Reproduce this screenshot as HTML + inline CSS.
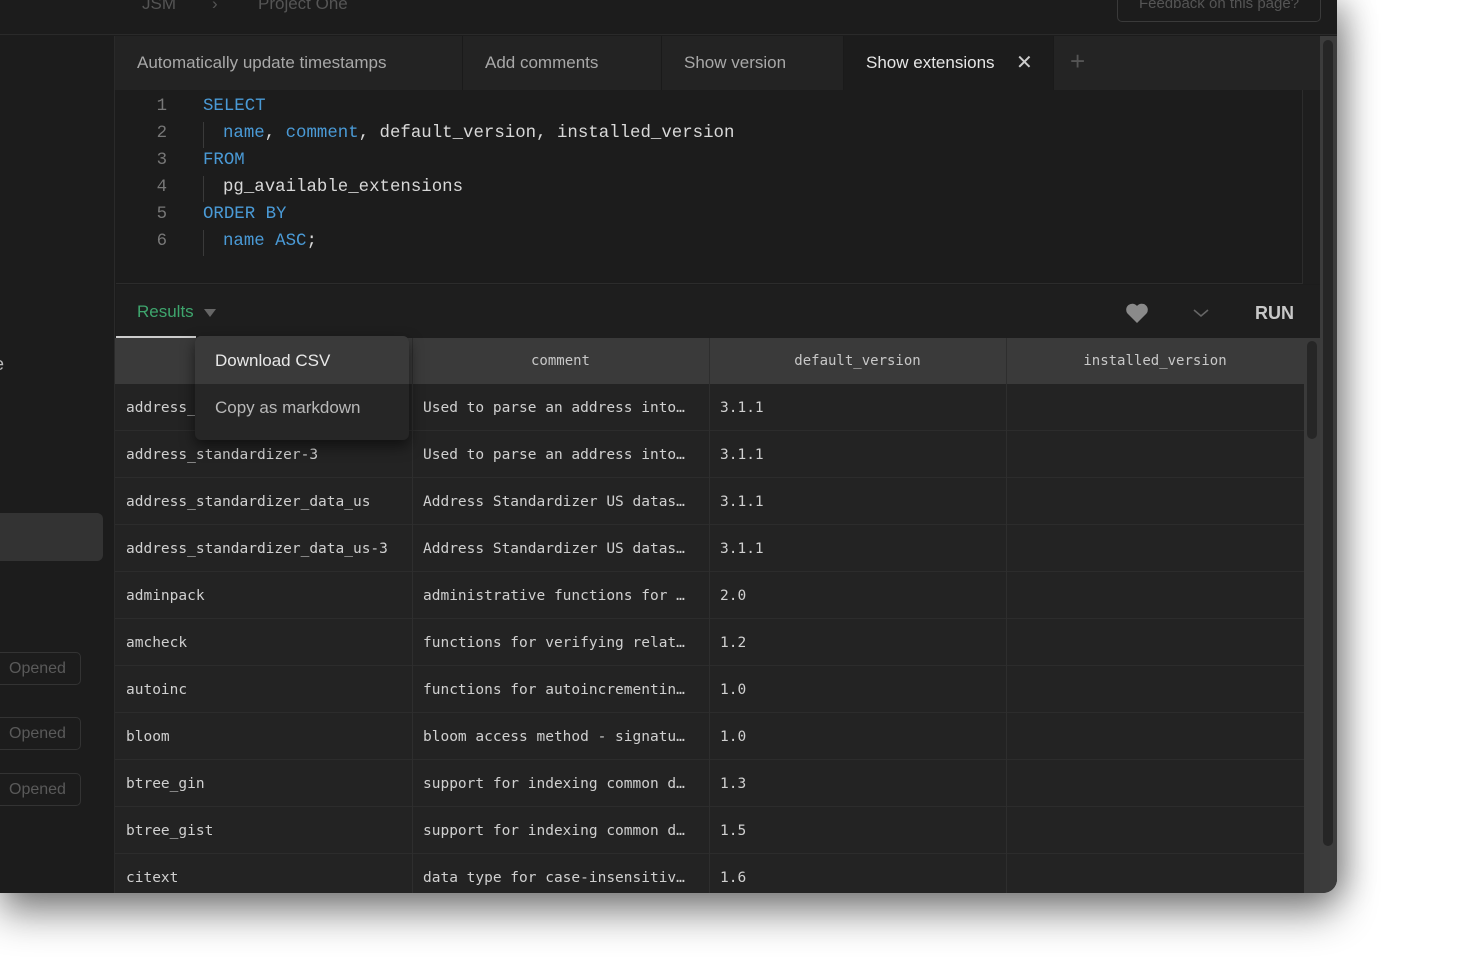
<!DOCTYPE html>
<html><head><style>
*{margin:0;padding:0;box-sizing:border-box}
body{width:1460px;height:960px;background:#fff;position:relative;overflow:hidden;font-family:"Liberation Sans",sans-serif}
.win{position:absolute;left:0;top:0;width:1337px;height:893px;background:#1c1c1c;border-bottom-right-radius:14px;overflow:hidden;box-shadow:0 20px 40px rgba(0,0,0,.45),10px 0 30px rgba(0,0,0,.25)}
.abs{position:absolute}
.mono{font-family:"DejaVu Sans Mono","Liberation Mono",monospace}
.lm{font-family:"Liberation Mono",monospace}
.tab{position:absolute;top:36px;height:54px;line-height:54px;font-size:17px;color:#a8a8a8;padding-left:22px;border-right:1px solid #1a1a1a;background:#232323}
.code{position:absolute;left:0;font-size:17.4px;color:#d8d8d8;white-space:pre}
.kw{color:#4a9ad6}
.ln{position:absolute;width:30px;text-align:right;left:137px;font-size:17.4px;color:#777}
.row{position:absolute;left:115px;width:1189px;height:47px;background:#232323;border-bottom:1px solid #2c2c2c}
.cell{position:absolute;top:0;height:47px;line-height:49px;font-size:14.5px;color:#d0d0d0;padding-left:11px;white-space:nowrap;overflow:hidden}
.vl{position:absolute;top:338px;width:1px;height:560px;background:#2e2e2e}
.badge{position:absolute;left:-10px;width:91px;height:33px;border:1px solid #333;border-radius:5px;color:#5a5a5a;font-size:16px;line-height:31px;padding-left:18px}
</style></head><body>
<div class="win">
 <div class="abs" style="left:0;top:0;width:1337px;height:35px;background:#1c1c1c;border-bottom:1px solid #2a2a2a"></div>
 <div class="abs" style="left:142px;top:-6px;font-size:17px;color:#555">JSM</div>
 <div class="abs" style="left:212px;top:-6px;font-size:17px;color:#555">›</div>
 <div class="abs" style="left:258px;top:-6px;font-size:17px;color:#555">Project One</div>
 <div class="abs" style="left:1117px;top:-12px;width:204px;height:34px;border:1px solid #3a3a3a;border-radius:5px;color:#555;font-size:15px;line-height:30px;text-align:center">Feedback on this page?</div>
 <div class="abs" style="left:0;top:36px;width:115px;height:860px;background:#1c1c1c;border-right:1px solid #2a2a2a"></div>
 <div class="abs" style="left:-6px;top:354px;font-size:18px;color:#bbb">e</div>
 <div class="abs" style="left:0;top:513px;width:103px;height:48px;background:#333;border-radius:0 6px 6px 0"></div>
 <div class="badge" style="top:652px">Opened</div>
 <div class="badge" style="top:717px">Opened</div>
 <div class="badge" style="top:773px">Opened</div>
 <div class="abs" style="left:115px;top:36px;width:1205px;height:54px;background:#242424"></div>
 <div class="tab" style="left:115px;width:348px">Automatically update timestamps</div>
 <div class="tab" style="left:463px;width:199px">Add comments</div>
 <div class="tab" style="left:662px;width:182px">Show version</div>
 <div class="tab" style="left:844px;width:210px;background:#1c1c1c;color:#e6e6e6">Show extensions<span style="position:absolute;left:172px;font-size:20px;color:#ccc">✕</span></div>
 <div class="abs" style="left:1070px;top:46px;font-size:26px;color:#555;font-weight:300">+</div>
 <div class="abs" style="left:116px;top:90px;width:1204px;height:194px;background:#1c1c1c;border-bottom:1px solid #2c2c2c"></div>
 <div class="abs" style="left:1302px;top:90px;width:1px;height:194px;background:#2c2c2c"></div>
 <div class="abs" style="left:1303px;top:90px;width:17px;height:194px;background:#1e1e1e"></div>
 <div class="ln lm" style="top:97px">1</div><div class="ln lm" style="top:124px">2</div><div class="ln lm" style="top:151px">3</div><div class="ln lm" style="top:178px">4</div><div class="ln lm" style="top:205px">5</div><div class="ln lm" style="top:232px">6</div>
 <div class="abs" style="left:203px;top:122px;width:1px;height:26px;background:#3a3a3a"></div>
 <div class="abs" style="left:203px;top:176px;width:1px;height:26px;background:#3a3a3a"></div>
 <div class="abs" style="left:203px;top:230px;width:1px;height:26px;background:#3a3a3a"></div>
 <div class="code lm kw" style="left:203px;top:97px">SELECT</div>
 <div class="code lm" style="left:223px;top:124px"><span class="kw">name</span>, <span class="kw">comment</span>, default_version, installed_version</div>
 <div class="code lm kw" style="left:203px;top:151px">FROM</div>
 <div class="code lm" style="left:223px;top:178px">pg_available_extensions</div>
 <div class="code lm kw" style="left:203px;top:205px">ORDER BY</div>
 <div class="code lm" style="left:223px;top:232px"><span class="kw">name ASC</span>;</div>
 <div class="abs" style="left:116px;top:285px;width:1204px;height:53px;background:#1e1e1e"></div>
 <div class="abs" style="left:137px;top:302px;font-size:17px;color:#3ea56d">Results</div>
 <div class="abs" style="left:204px;top:309px;width:0;height:0;border-left:6px solid transparent;border-right:6px solid transparent;border-top:8px solid #666"></div>
 <div class="abs" style="left:116px;top:336px;width:80px;height:2px;background:#ccc"></div>
 <svg class="abs" style="left:1124px;top:302px" width="26" height="22" viewBox="0 0 24 22"><path d="M12 21 L2.5 11.5 A5.5 5.5 0 0 1 12 4 A5.5 5.5 0 0 1 21.5 11.5 Z" fill="#8a8a8a"/></svg>
 <svg class="abs" style="left:1191px;top:306px" width="20" height="14" viewBox="0 0 20 14"><path d="M3 4 L10 10 L17 4" stroke="#666" stroke-width="1.6" fill="none"/></svg>
 <div class="abs" style="left:1255px;top:303px;font-size:18px;color:#c8c8c8;font-weight:bold">RUN</div>
 <div class="abs" style="left:115px;top:338px;width:1190px;height:46px;background:#3a3a3a"></div>
 <div class="abs mono" style="left:412px;top:338px;width:297px;line-height:46px;text-align:center;color:#c8c8c8;font-size:14px">comment</div>
 <div class="abs mono" style="left:709px;top:338px;width:297px;line-height:46px;text-align:center;color:#c8c8c8;font-size:14px">default_version</div>
 <div class="abs mono" style="left:1006px;top:338px;width:298px;line-height:46px;text-align:center;color:#c8c8c8;font-size:14px">installed_version</div>
 <div class="row mono" style="top:384px"><div class="cell" style="left:0">address_</div><div class="cell" style="left:297px">Used to parse an address into…</div><div class="cell" style="left:594px">3.1.1</div></div>
 <div class="row mono" style="top:431px"><div class="cell" style="left:0">address_standardizer-3</div><div class="cell" style="left:297px">Used to parse an address into…</div><div class="cell" style="left:594px">3.1.1</div></div>
 <div class="row mono" style="top:478px"><div class="cell" style="left:0">address_standardizer_data_us</div><div class="cell" style="left:297px">Address Standardizer US datas…</div><div class="cell" style="left:594px">3.1.1</div></div>
 <div class="row mono" style="top:525px"><div class="cell" style="left:0">address_standardizer_data_us-3</div><div class="cell" style="left:297px">Address Standardizer US datas…</div><div class="cell" style="left:594px">3.1.1</div></div>
 <div class="row mono" style="top:572px"><div class="cell" style="left:0">adminpack</div><div class="cell" style="left:297px">administrative functions for …</div><div class="cell" style="left:594px">2.0</div></div>
 <div class="row mono" style="top:619px"><div class="cell" style="left:0">amcheck</div><div class="cell" style="left:297px">functions for verifying relat…</div><div class="cell" style="left:594px">1.2</div></div>
 <div class="row mono" style="top:666px"><div class="cell" style="left:0">autoinc</div><div class="cell" style="left:297px">functions for autoincrementin…</div><div class="cell" style="left:594px">1.0</div></div>
 <div class="row mono" style="top:713px"><div class="cell" style="left:0">bloom</div><div class="cell" style="left:297px">bloom access method - signatu…</div><div class="cell" style="left:594px">1.0</div></div>
 <div class="row mono" style="top:760px"><div class="cell" style="left:0">btree_gin</div><div class="cell" style="left:297px">support for indexing common d…</div><div class="cell" style="left:594px">1.3</div></div>
 <div class="row mono" style="top:807px"><div class="cell" style="left:0">btree_gist</div><div class="cell" style="left:297px">support for indexing common d…</div><div class="cell" style="left:594px">1.5</div></div>
 <div class="row mono" style="top:854px"><div class="cell" style="left:0">citext</div><div class="cell" style="left:297px">data type for case-insensitiv…</div><div class="cell" style="left:594px">1.6</div></div>
 <div class="vl" style="left:412px"></div><div class="vl" style="left:709px"></div><div class="vl" style="left:1006px"></div>
 <div class="abs" style="left:1304px;top:338px;width:16px;height:560px;background:#3a3a3a"></div>
 <div class="abs" style="left:1307px;top:341px;width:10px;height:98px;background:#262626;border-radius:5px"></div>
 <div class="abs" style="left:1320px;top:36px;width:17px;height:860px;background:#3c3c3c"></div>
 <div class="abs" style="left:1323px;top:40px;width:10px;height:806px;background:#262626;border-radius:5px"></div>
 <div class="abs" style="left:195px;top:336px;width:214px;height:104px;background:#262626;border-radius:6px;box-shadow:0 6px 14px rgba(0,0,0,.55);overflow:hidden">
  <div style="height:48px;background:#3a3a3a;color:#e8e8e8;font-size:17px;line-height:50px;padding-left:20px">Download CSV</div>
  <div style="height:48px;color:#b8b8b8;font-size:17px;line-height:48px;padding-left:20px">Copy as markdown</div>
 </div>
</div>
</body></html>
